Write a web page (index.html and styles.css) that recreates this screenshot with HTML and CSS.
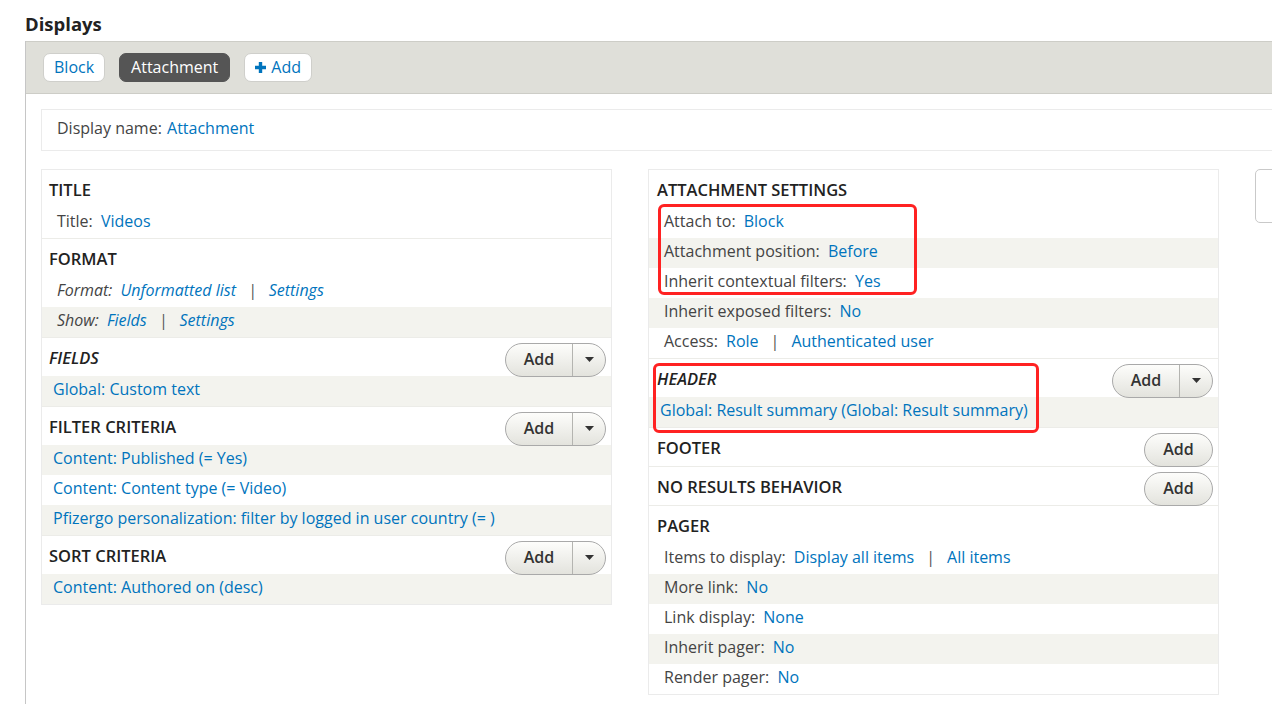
FILE: index.html
```html
<!DOCTYPE html>
<html lang="en">
<head>
<meta charset="utf-8">
<title>Displays</title>
<link rel="stylesheet" href="styles.css">
</head>
<body>
<h1 class="page-title">Displays</h1>
<div class="displays">
  <div class="tabbar">
    <a class="tab">Block</a>
    <a class="tab is-active">Attachment</a>
    <a class="tab tab-add"><svg class="plus" width="11" height="11" viewBox="0 0 11 11"><path d="M3.8 0h3.4v3.8H11v3.4H7.2V11H3.8V7.2H0V3.8h3.8z" fill="#0074bd"/></svg>Add</a>
  </div>
  <div class="display-body">
    <div class="display-name"><span class="label">Display name:</span> <a>Attachment</a></div>
    <div class="columns">
      <div class="column">
        <section class="bucket">
          <div class="bucket-head"><h3>Title</h3></div>
          <div class="row setting"><span class="label">Title:</span> <a>Videos</a></div>
        </section>
        <section class="bucket">
          <div class="bucket-head"><h3>Format</h3></div>
          <div class="row setting italic"><span class="label">Format:</span> <a>Unformatted list</a><span class="sep">|</span><a>Settings</a></div>
          <div class="row setting italic alt"><span class="label">Show:</span> <a>Fields</a><span class="sep">|</span><a>Settings</a></div>
        </section>
        <section class="bucket">
          <div class="bucket-head"><h3 class="italic">Fields</h3>
            <div class="dropbutton"><span class="db-main">Add</span><span class="db-toggle"><svg width="9" height="5" viewBox="0 0 9 5"><path d="M0 0h9L4.5 5z" fill="#333"/></svg></span></div>
          </div>
          <div class="row field alt"><a>Global: Custom text</a></div>
        </section>
        <section class="bucket">
          <div class="bucket-head"><h3>Filter criteria</h3>
            <div class="dropbutton"><span class="db-main">Add</span><span class="db-toggle"><svg width="9" height="5" viewBox="0 0 9 5"><path d="M0 0h9L4.5 5z" fill="#333"/></svg></span></div>
          </div>
          <div class="row field alt"><a>Content: Published (= Yes)</a></div>
          <div class="row field"><a>Content: Content type (= Video)</a></div>
          <div class="row field alt"><a>Pfizergo personalization: filter by logged in user country (= )</a></div>
        </section>
        <section class="bucket">
          <div class="bucket-head"><h3>Sort criteria</h3>
            <div class="dropbutton"><span class="db-main">Add</span><span class="db-toggle"><svg width="9" height="5" viewBox="0 0 9 5"><path d="M0 0h9L4.5 5z" fill="#333"/></svg></span></div>
          </div>
          <div class="row field alt"><a>Content: Authored on (desc)</a></div>
        </section>
      </div>

      <div class="column column-right">
        <section class="bucket">
          <div class="bucket-head"><h3>Attachment settings</h3></div>
          <div class="row setting"><span class="label">Attach to:</span> <a>Block</a></div>
          <div class="row setting alt"><span class="label">Attachment position:</span> <a>Before</a></div>
          <div class="row setting"><span class="label">Inherit contextual filters:</span> <a>Yes</a></div>
          <div class="row setting alt"><span class="label">Inherit exposed filters:</span> <a>No</a></div>
          <div class="row setting"><span class="label">Access:</span> <a>Role</a><span class="sep">|</span><a>Authenticated user</a></div>
        </section>
        <section class="bucket">
          <div class="bucket-head"><h3 class="italic">Header</h3>
            <div class="dropbutton"><span class="db-main">Add</span><span class="db-toggle"><svg width="9" height="5" viewBox="0 0 9 5"><path d="M0 0h9L4.5 5z" fill="#333"/></svg></span></div>
          </div>
          <div class="row field alt"><a>Global: Result summary (Global: Result summary)</a></div>
        </section>
        <section class="bucket">
          <div class="bucket-head"><h3>Footer</h3><div class="btn-add">Add</div></div>
        </section>
        <section class="bucket">
          <div class="bucket-head"><h3>No results behavior</h3><div class="btn-add">Add</div></div>
        </section>
        <section class="bucket">
          <div class="bucket-head"><h3>Pager</h3></div>
          <div class="row setting"><span class="label">Items to display:</span> <a>Display all items</a><span class="sep">|</span><a>All items</a></div>
          <div class="row setting alt"><span class="label">More link:</span> <a>No</a></div>
          <div class="row setting"><span class="label">Link display:</span> <a>None</a></div>
          <div class="row setting alt"><span class="label">Inherit pager:</span> <a>No</a></div>
          <div class="row setting"><span class="label">Render pager:</span> <a>No</a></div>
        </section>
        <div class="annot annot-1"></div>
        <div class="annot annot-2"></div>
      </div>

      <div class="sidebar-box"></div>
    </div>
  </div>
</div>
</body>
</html>
```

FILE: styles.css
```css
html, body {
  margin: 0;
  background: #fff;
}
body {
  font-family: "Open Sans", "Liberation Sans", sans-serif;
  font-size: 16px;
  color: #333;
  overflow: hidden;
}
a {
  color: #0074bd;
  text-decoration: none;
}
.page-title {
  margin: 12px 0 5px 25px;
  font-size: 18.5px;
  line-height: 24px;
  font-weight: 700;
  color: #222;
}
.displays {
  margin-left: 25px;
  border-left: 1px solid #c6c6c6;
  width: 1560px;
  min-height: 720px;
}
.tabbar {
  display: flex;
  gap: 14px;
  padding: 11px 17px;
  background: #dfdfd9;
  border-top: 1px solid #cdcdc7;
  border-bottom: 1px solid #cdcdc7;
}
.tab {
  display: inline-flex;
  align-items: center;
  height: 29px;
  box-sizing: border-box;
  padding: 0 10px 1px;
  border: 1px solid #cfcfcb;
  border-radius: 7px;
  background: #fff;
  color: #0074bd;
  font-size: 16px;
}
.tab.is-active {
  background: #555;
  border-color: #555;
  color: #fff;
  padding: 0 11px 1px;
}
.tab-add .plus {
  margin-right: 5px;
}
.display-body {
  padding: 15px 0 0 15px;
}
.display-name {
  height: 42px;
  box-sizing: border-box;
  border: 1px solid #ebebeb;
  padding-left: 15px;
  line-height: 36px;
}
.display-name .label {
  margin-right: 1px;
}
.label {
  color: #444;
  margin-right: 4px;
}
.columns {
  display: flex;
  align-items: flex-start;
  gap: 36px;
  margin-top: 18px;
}
.column {
  flex: none;
  width: 571px;
  box-sizing: border-box;
  border: 1px solid #ebebeb;
}
.column-right {
  position: relative;
}
.sidebar-box {
  flex: none;
  width: 300px;
  height: 54px;
  box-sizing: border-box;
  border: 1px solid #c9c9c9;
  border-radius: 5px;
}
.bucket {
  border-bottom: 1px solid #ececE8;
}
.bucket:last-of-type {
  border-bottom: 0;
}
.bucket-head {
  height: 38px;
  display: flex;
  justify-content: space-between;
  align-items: flex-start;
  padding: 0 5px 0 7px;
}
.column-right .bucket-head {
  padding-left: 8px;
}
.bucket-head h3 {
  margin: 0;
  font-size: 16.5px;
  font-weight: 600;
  line-height: 39px;
  text-transform: uppercase;
  color: #222;
}
.italic {
  font-style: italic;
}
.row {
  height: 30px;
  line-height: 26px;
  white-space: nowrap;
  padding-left: 15px;
}
.row.field {
  padding-left: 11px;
}
.row.alt {
  background: #f3f3ee;
}
.sep {
  color: #555;
  margin: 0 12px;
}
.dropbutton {
  flex: none;
  display: flex;
  height: 34px;
  box-sizing: border-box;
  margin-top: 5px;
  border: 1px solid #a9a9a9;
  border-radius: 17px;
  background: linear-gradient(#fdfdfb, #e3e3dd);
  overflow: hidden;
  font-weight: 600;
  color: #333;
  position: relative;
  z-index: 1;
}
.db-main {
  width: 66px;
  text-align: center;
  line-height: 30px;
}
.db-toggle {
  width: 32px;
  border-left: 1px solid #b4b4b0;
  display: flex;
  align-items: center;
  justify-content: center;
  padding-bottom: 2px;
}
.btn-add {
  flex: none;
  width: 69px;
  height: 34px;
  box-sizing: border-box;
  margin-top: 5px;
  border: 1px solid #a9a9a9;
  border-radius: 17px;
  background: linear-gradient(#fdfdfb, #e3e3dd);
  text-align: center;
  line-height: 30px;
  font-weight: 600;
  color: #333;
}
.annot {
  position: absolute;
  box-sizing: border-box;
  border: 3px solid #ff2222;
  border-radius: 6px;
  z-index: 2;
}
.annot-1 {
  left: 9px;
  top: 34px;
  width: 259px;
  height: 91px;
}
.annot-2 {
  left: 4px;
  top: 193px;
  width: 386px;
  height: 70px;
}
```
